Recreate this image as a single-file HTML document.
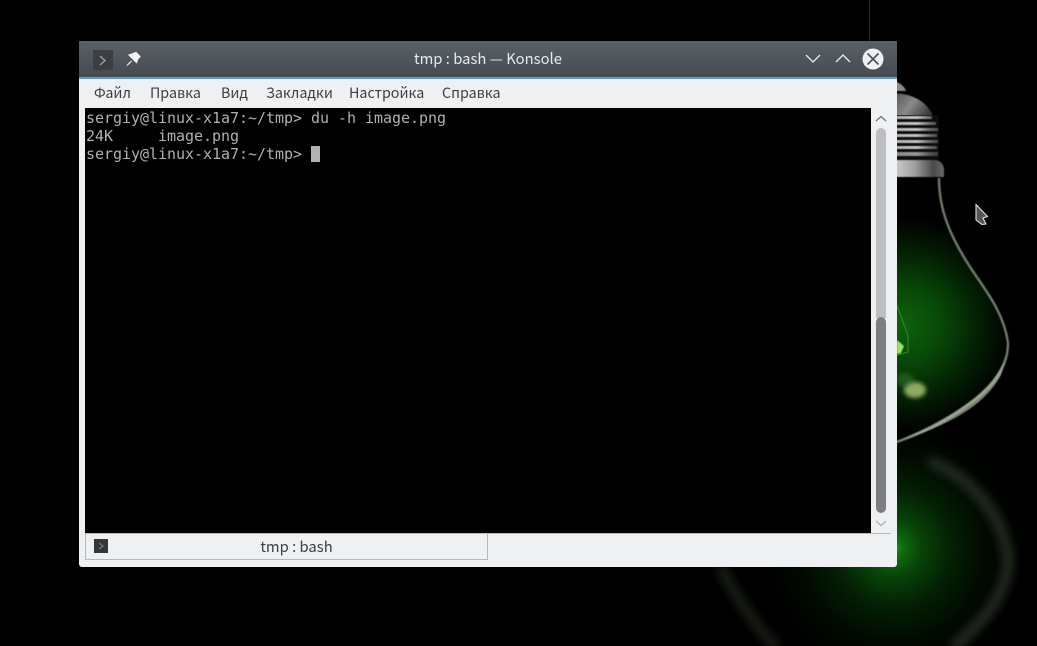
<!DOCTYPE html>
<html lang="ru">
<head>
<meta charset="utf-8">
<title>tmp : bash — Konsole</title>
<style>
html,body{margin:0;padding:0;background:#000;}
body{width:1037px;height:646px;position:relative;overflow:hidden;font-family:"Noto Sans CJK SC","Liberation Sans",sans-serif;}
.abs{position:absolute;}
#bg{left:0;top:0;}
#win{left:79px;top:41px;width:818px;height:526px;background:#eff0f1;border-radius:2px 2px 3px 3px;overflow:hidden;}
#title{left:0;top:0;width:818px;height:36px;background:linear-gradient(#5a6166,#454b50);}
#accent{left:0;top:36px;width:818px;height:2px;background:#5b9bc9;}
#ttext{left:0;top:0;width:818px;height:36px;line-height:35px;text-align:center;color:#e8eaeb;font-size:14.8px;}
.menu{top:42px;height:20px;line-height:20px;font-size:14.3px;color:#3a3f43;white-space:nowrap;}
#term{left:6px;top:67px;width:786px;height:425px;background:#000;}
#text{left:1px;top:1px;margin:0;font-family:"DejaVu Sans Mono","Liberation Mono",monospace;font-size:15px;letter-spacing:-0.03px;line-height:18px;color:#b0b0b0;white-space:pre;}
#cursor{left:226px;top:38px;width:9px;height:16px;background:#b2b2b2;}
#sb1{left:797px;top:87px;width:10px;height:190px;background:#bdbec0;border-radius:5px 5px 0 0;}
#sb2{left:797px;top:276px;width:10px;height:196px;background:#7d7e81;border-radius:5px;}
#tabline{left:6px;top:492px;width:806px;height:1px;background:#b9bbbc;}
#tab{left:6px;top:493px;width:401px;height:25px;border:1px solid #b5b7b8;border-top:none;background:#eff0f1;}
#tabtext{left:6px;top:493px;width:423px;height:26px;line-height:25px;text-align:center;font-size:14.8px;color:#3a3f43;}
#tabicon{left:15px;top:498px;width:14px;height:14px;background:#33373a;}
</style>
</head>
<body>
<svg id="bg" class="abs" width="1037" height="646" viewBox="0 0 1037 646" xmlns="http://www.w3.org/2000/svg">
<defs>
<radialGradient id="glow" gradientUnits="userSpaceOnUse" cx="905" cy="325" r="110">
<stop offset="0" stop-color="#0c620c"/>
<stop offset="0.35" stop-color="#084608"/>
<stop offset="0.65" stop-color="#032203"/>
<stop offset="0.9" stop-color="#010801"/>
<stop offset="1" stop-color="#000"/>
</radialGradient>
<radialGradient id="glow2" gradientUnits="userSpaceOnUse" cx="893" cy="548" r="130">
<stop offset="0" stop-color="#1fa81f"/>
<stop offset="0.07" stop-color="#0f6e0f"/>
<stop offset="0.22" stop-color="#084408"/>
<stop offset="0.45" stop-color="#032003"/>
<stop offset="0.72" stop-color="#010a01"/>
<stop offset="1" stop-color="#000"/>
</radialGradient>
<linearGradient id="cap" x1="0" x2="1" y1="0" y2="0">
<stop offset="0" stop-color="#d8d8d8"/>
<stop offset="0.45" stop-color="#a0a0a0"/>
<stop offset="0.8" stop-color="#4a4a4a"/>
<stop offset="1" stop-color="#6a6a6a"/>
</linearGradient>
<linearGradient id="dome" gradientUnits="userSpaceOnUse" x1="897" y1="95" x2="935" y2="125">
<stop offset="0" stop-color="#5c5c5c"/>
<stop offset="0.35" stop-color="#8a8a8a"/>
<stop offset="0.75" stop-color="#3c3c3c"/>
<stop offset="1" stop-color="#2a2a2a"/>
</linearGradient>
<linearGradient id="thr" gradientUnits="userSpaceOnUse" x1="895" y1="0" x2="939" y2="0">
<stop offset="0" stop-color="#b5b5b5"/>
<stop offset="0.5" stop-color="#c8c8c8"/>
<stop offset="0.8" stop-color="#6a6a6a"/>
<stop offset="1" stop-color="#4c4c4c"/>
</linearGradient>
<filter id="b5" x="-30%" y="-30%" width="160%" height="160%"><feGaussianBlur stdDeviation="5"/></filter>
<filter id="b1" x="-10%" y="-10%" width="120%" height="120%"><feGaussianBlur stdDeviation="0.6"/></filter>
<filter id="b3" x="-50%" y="-50%" width="200%" height="200%"><feGaussianBlur stdDeviation="2"/></filter>
<filter id="bt" x="-10%" y="-10%" width="120%" height="120%"><feGaussianBlur stdDeviation="0.45"/></filter>
<clipPath id="bulbclip"><path d="M880 178H939C940 215 960 250 985 285C1005 315 1012 345 1000 372C985 405 940 435 880 447Z"/></clipPath>
</defs>
<rect width="1037" height="646" fill="#000"/>
<line x1="869.500" y1="0" x2="869.500" y2="42" stroke="#2a2a2a" stroke-width="1"/>
<!-- lower reflection glow -->
<rect x="740" y="410" width="297" height="236" fill="url(#glow2)"/>
<!-- bulb glow -->
<rect x="800" y="178" width="237" height="270" fill="url(#glow)" clip-path="url(#bulbclip)"/>
<!-- reflection arcs -->
<g fill="none" stroke="#35402f" stroke-linecap="round" filter="url(#b5)">
<path d="M932 462C975 480 1005 520 1008 560C1008 595 980 625 955 646" stroke-width="9" opacity=".8"/>
<path d="M722 570C735 595 755 625 775 646" stroke-width="9" opacity=".55"/>
</g>
<!-- glass -->
<path d="M939 178C939 210 950 236 970 267C985 290 1004 312 1008 343C1008 370 990 390 968 405C945 422 920 436 880 447" fill="none" stroke="#6f7c6a" stroke-width="2.400" filter="url(#b1)"/>
<path d="M1006 355C995 392 950 418 900 440C950 425 985 405 1001 375Z" fill="#aeb9a6" opacity=".7" filter="url(#b1)"/>
<!-- filament -->
<path d="M897 305L908 336V352L897 355" fill="none" stroke="#3fa52a" stroke-width="1" opacity=".7"/>
<path d="M897 340L904 346L901 353L897 354Z" fill="#9ee65f" filter="url(#b1)"/>
<!-- highlight -->
<ellipse cx="915" cy="390" rx="11" ry="8" fill="#8faa60" filter="url(#b3)"/>
<ellipse cx="905" cy="380" rx="9" ry="7" fill="#4b8a3a" opacity=".4" filter="url(#b3)"/>
<!-- screw base -->
<path d="M890 82H897C903 85 905 88 906 91H890Z" fill="#8a8a8a" filter="url(#bt)"/>
<path d="M890 93C915 93 928 103 934 118V125H890Z" fill="url(#dome)" filter="url(#bt)"/>
<rect x="890" y="115" width="49" height="46" fill="#0c0c0c"/>
<g filter="url(#bt)">
<rect x="890" y="116" width="42" height="3" fill="url(#thr)"/>
<rect x="890" y="122" width="46" height="3" fill="url(#thr)"/>
<rect x="890" y="128" width="48" height="3" fill="url(#thr)"/>
<rect x="890" y="134" width="47" height="3" fill="url(#thr)"/>
<rect x="890" y="140" width="48" height="3" fill="url(#thr)"/>
<rect x="890" y="146" width="47" height="3" fill="url(#thr)"/>
<rect x="890" y="152" width="48" height="4" fill="url(#thr)" opacity=".75"/>
</g>
<path d="M890 160H934C940 160 944 164 944 170V177H890Z" fill="url(#cap)" filter="url(#bt)"/>
<!-- mouse cursor -->
<path d="M976 204.500L987.500 216.500L983 218L986 224L982 224.500L976 220Z" fill="#555" stroke="#eee" stroke-width="1"/>
</svg>

<div id="win" class="abs">
  <div id="title" class="abs"></div>
  <div id="accent" class="abs"></div>
  <div id="ttext" class="abs">tmp : bash — Konsole</div>
  <svg class="abs" style="left:0;top:0" width="818" height="36" xmlns="http://www.w3.org/2000/svg">
    <rect x="14" y="9" width="20" height="20" fill="#3b3f42"/>
    <path d="M21 15L26 19.500L21 24" fill="none" stroke="#9a9d9f" stroke-width="1.500"/>
    <path d="M57 11.500L61 15.500L58.500 18.500L57.500 21.500L50 14L53 13ZM52.500 20L48 24.500" fill="#f2f3f3" stroke="#f2f3f3" stroke-width="1.200"/>
    <path d="M727 14L734 21L741 14" fill="none" stroke="#eceeee" stroke-width="1.300"/>
    <path d="M757 21L764 14L771 21" fill="none" stroke="#eceeee" stroke-width="1.300"/>
    <circle cx="794" cy="18" r="10.500" fill="#eff0f1"/>
    <path d="M788.500 12.500L799.500 23.500M799.500 12.500L788.500 23.500" stroke="#4a5055" stroke-width="1.600"/>
  </svg>
  <div class="abs menu" style="left:15px">Файл</div>
  <div class="abs menu" style="left:71px">Правка</div>
  <div class="abs menu" style="left:142px">Вид</div>
  <div class="abs menu" style="left:187px">Закладки</div>
  <div class="abs menu" style="left:270px">Настройка</div>
  <div class="abs menu" style="left:363px">Справка</div>
  <div id="term" class="abs">
    <pre id="text" class="abs">sergiy@linux-x1a7:~/tmp&gt; du -h image.png
24K     image.png
sergiy@linux-x1a7:~/tmp&gt; </pre>
    <div id="cursor" class="abs"></div>
  </div>
  <svg class="abs" style="left:792px;top:67px" width="20" height="425" xmlns="http://www.w3.org/2000/svg">
    <path d="M5 13L10 8.500L15 13" fill="none" stroke="#6b6e70" stroke-width="1.200"/>
    <path d="M5 413L10 417.500L15 413" fill="none" stroke="#b5b7b8" stroke-width="1.500"/>
  </svg>
  <div id="sb1" class="abs"></div>
  <div id="sb2" class="abs"></div>
  <div id="tabline" class="abs"></div>
  <div id="tab" class="abs"></div>
  <div id="tabtext" class="abs">tmp : bash</div>
  <div id="tabicon" class="abs"></div>
  <svg class="abs" style="left:15px;top:498px" width="14" height="14" xmlns="http://www.w3.org/2000/svg">
    <path d="M5 4L9 7L5 10" fill="none" stroke="#85888a" stroke-width="1"/>
  </svg>
</div>
</body>
</html>
